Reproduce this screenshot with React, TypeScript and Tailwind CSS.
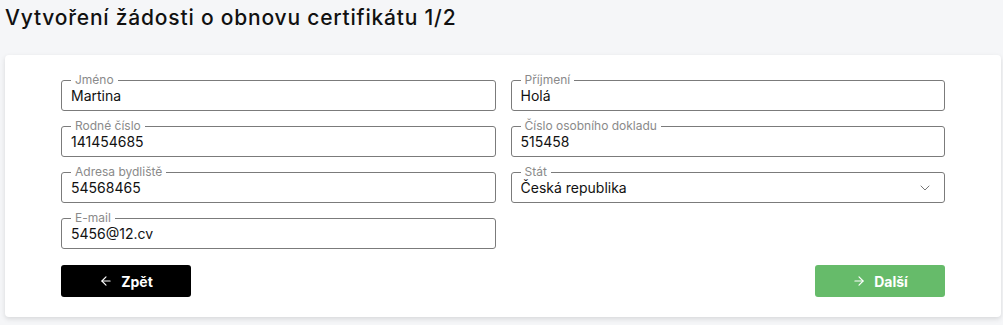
import React, { FC } from "react";
import { ArrowLeft, ArrowRight, ChevronDown } from "lucide-react";

interface FieldProps {
  label: string;
  value: string;
  select?: boolean;
}

const Field: FC<FieldProps> = ({ label, value, select }) => (
  <fieldset className="border border-[#7b7b7b] rounded-[3px] px-[9px] pb-[4px] min-w-0">
    <legend className="px-[4px] text-[12px] leading-[12px] text-[#8a8a8a]">
      {label}
    </legend>
    <div className="flex flex-row items-center h-5">
      <input
        readOnly
        value={value}
        className="flex-1 min-w-0 bg-transparent outline-none text-[14px] leading-5 text-[#111]"
      />
      {select && <ChevronDown className="w-4 h-4 text-[#777] mr-[2px]" strokeWidth={1.5} />}
    </div>
  </fieldset>
);

const App: FC = () => {
  return (
    <div
      className="w-[1003px] h-[325px] bg-[#f5f6f8] px-[5px] pt-[4px]"
      style={{ fontFamily: "Inter, 'Noto Sans', sans-serif" }}
    >
      {/* Title */}
      <h1 className="text-[21px] leading-[28px] font-medium tracking-[0.8px] text-[#111]">
        Vytvoření žádosti o obnovu certifikátu 1/2
      </h1>

      {/* Card */}
      <div className="mt-[23px] w-[996px] bg-white rounded-[4px] shadow-[0_2px_5px_rgba(0,0,0,0.12)] px-14 pt-[19px] pb-5">
        <div className="grid grid-cols-2 gap-x-[15px] gap-y-[9px]">
          <Field label="Jméno" value="Martina" />
          <Field label="Příjmení" value="Holá" />
          <Field label="Rodné číslo" value="141454685" />
          <Field label="Číslo osobního dokladu" value="515458" />
          <Field label="Adresa bydliště" value="54568465" />
          <Field label="Stát" value="Česká republika" select />
          <Field label="E-mail" value="5456@12.cv" />
        </div>

        {/* Buttons */}
        <div className="flex flex-row justify-between mt-4">
          <button className="flex flex-row justify-center items-center gap-2 w-[130px] h-8 bg-black text-white text-[14px] font-bold rounded-[3px]">
            <ArrowLeft className="w-[14px] h-[14px]" strokeWidth={2} />
            Zpět
          </button>
          <button className="flex flex-row justify-center items-center gap-2 w-[130px] h-8 bg-[#66bb6a] text-white text-[14px] font-bold rounded-[3px]">
            <ArrowRight className="w-[14px] h-[14px]" strokeWidth={2} />
            Další
          </button>
        </div>
      </div>
    </div>
  );
};

export default App;
